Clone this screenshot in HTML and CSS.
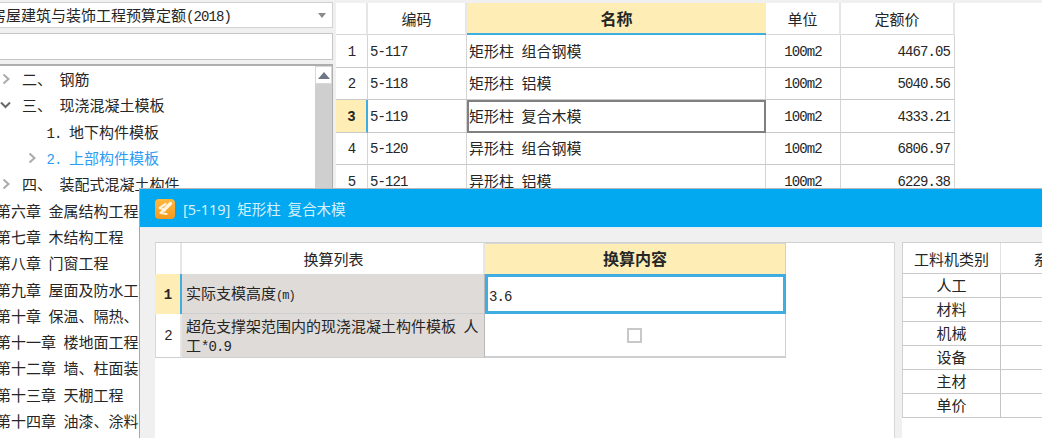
FILE: index.html
```html
<!DOCTYPE html>
<html lang="zh">
<head>
<meta charset="utf-8">
<title>定额换算</title>
<link rel="stylesheet" href="styles.css">
</head>
<body>
<div class="app">
  <aside class="side">
    <div class="combo">
      <span class="combo-text">房屋建筑与装饰工程预算定额<span class="num">(2018)</span></span>
      <svg class="caret" width="8" height="5" viewBox="0 0 8 5"><path d="M0 0h8L4 5z" fill="#8a8a8a"/></svg>
    </div>
    <div class="search"></div>
    <div class="tree">
      <div class="tree-rows">
        <div class="row l1"><svg class="chev" width="8" height="12" viewBox="0 0 8 12"><path d="M1.500 1.500 6.500 6l-5 4.500" fill="none" stroke="#ababab" stroke-width="2"/></svg><span>二、 钢筋</span></div>
        <div class="row l1"><svg class="chev open" width="11" height="12" viewBox="0 0 11 12"><path d="M1 3.500 5.500 8 10 3.500" fill="none" stroke="#6a6a6a" stroke-width="2"/></svg><span>三、 现浇混凝土模板</span></div>
        <div class="row l2"><span class="chev-blank"></span><span><span class="num">1. </span>地下构件模板</span></div>
        <div class="row l2 active"><svg class="chev" width="8" height="12" viewBox="0 0 8 12"><path d="M1.500 1.500 6.500 6l-5 4.500" fill="none" stroke="#ababab" stroke-width="2"/></svg><span><span class="num">2. </span>上部构件模板</span></div>
        <div class="row l1"><svg class="chev" width="8" height="12" viewBox="0 0 8 12"><path d="M1.500 1.500 6.500 6l-5 4.500" fill="none" stroke="#ababab" stroke-width="2"/></svg><span>四、 装配式混凝土构件</span></div>
        <div class="row l0">第六章 金属结构工程</div>
        <div class="row l0">第七章 木结构工程</div>
        <div class="row l0">第八章 门窗工程</div>
        <div class="row l0">第九章 屋面及防水工程</div>
        <div class="row l0">第十章 保温、隔热、防腐工程</div>
        <div class="row l0">第十一章 楼地面工程</div>
        <div class="row l0">第十二章 墙、柱面装饰工程</div>
        <div class="row l0">第十三章 天棚工程</div>
        <div class="row l0">第十四章 油漆、涂料工程</div>
      </div>
      <div class="scrollbar">
        <div class="scroll-up"><svg width="12" height="7" viewBox="0 0 12 7"><path d="M0 7 6 0l6 7z" fill="#6f7688"/></svg></div>
      </div>
    </div>
  </aside>

  <main class="grid-wrap">
    <div class="quota">
      <div class="qh"></div><div class="qh">编码</div><div class="qh sel">名称</div><div class="qh">单位</div><div class="qh">定额价</div>

      <div class="qc ctr num">1</div><div class="qc num">5-117</div><div class="qc">矩形柱 组合钢模</div><div class="qc ctr num">100m2</div><div class="qc rt num">4467.05</div>
      <div class="qc ctr num">2</div><div class="qc num">5-118</div><div class="qc">矩形柱 铝模</div><div class="qc ctr num">100m2</div><div class="qc rt num">5040.56</div>
      <div class="qc ctr num cur">3</div><div class="qc num">5-119</div><div class="qc focus">矩形柱 复合木模</div><div class="qc ctr num">100m2</div><div class="qc rt num">4333.21</div>
      <div class="qc ctr num">4</div><div class="qc num">5-120</div><div class="qc">异形柱 组合钢模</div><div class="qc ctr num">100m2</div><div class="qc rt num">6806.97</div>
      <div class="qc ctr num">5</div><div class="qc num">5-121</div><div class="qc">异形柱 铝模</div><div class="qc ctr num">100m2</div><div class="qc rt num">6229.38</div>
    </div>
  </main>
</div>

<section class="dialog">
  <header class="dlg-title">
    <svg class="dlg-icon" width="20" height="20" viewBox="0 0 20 20">
      <defs><linearGradient id="ic" x1="0" y1="0" x2="0" y2="1"><stop offset="0" stop-color="#fdb840"/><stop offset="1" stop-color="#f79a1c"/></linearGradient></defs>
      <rect width="20" height="20" rx="4" fill="url(#ic)"/>
      <path d="M10.500 5 4.500 9 9 10.500 5.500 14 11.500 15" fill="none" stroke="#fff1d6" stroke-width="2.200" stroke-linecap="round" stroke-linejoin="round"/>
      <path d="M9 11 15.500 4.500" fill="none" stroke="#fff6e6" stroke-width="3.200" stroke-linecap="round"/>
    </svg>
    <span class="dlg-text">[5-119] 矩形柱 复合木模</span>
  </header>
  <div class="dlg-body">
    <div class="panel conv-panel">
      <div class="conv">
        <div class="ch"></div><div class="ch">换算列表</div><div class="ch sel">换算内容</div>

        <div class="cc cur num">1</div>
        <div class="cc name">实际支模高度<span class="small">(m)</span></div>
        <div class="cc value num">3.6</div>

        <div class="cc idx num">2</div>
        <div class="cc name">超危支撑架范围内的现浇混凝土构件模板 人工<span class="num">*0.9</span></div>
        <div class="cc check"><span class="box"></span></div>
      </div>
    </div>
    <div class="panel labor-panel">
      <div class="labor">
        <div class="lh">工料机类别</div><div class="lh">系数</div>
        <div class="lc">人工</div><div class="lc"></div>
        <div class="lc">材料</div><div class="lc"></div>
        <div class="lc">机械</div><div class="lc"></div>
        <div class="lc">设备</div><div class="lc"></div>
        <div class="lc">主材</div><div class="lc"></div>
        <div class="lc">单价</div><div class="lc"></div>
      </div>
    </div>
  </div>
</section>
</body>
</html>
```

FILE: styles.css
```css
* { box-sizing: border-box; }

html, body {
  margin: 0;
  height: 100%;
  overflow: hidden;
}

body {
  position: relative;
  width: 1042px;
  height: 438px;
  background: #f0f0f0;
  color: #262626;
  font-family: "Liberation Mono", "Noto Sans CJK SC", monospace;
  font-size: 15px;
  word-spacing: -1.5px;
}

.num {
  font-size: 14px;
  letter-spacing: -0.9px;
  word-spacing: 0;
}

.small {
  font-size: 12px;
  letter-spacing: -1px;
}

.app {
  display: flex;
  gap: 3px;
  height: 438px;
}

/* left column */
.side {
  width: 333px;
  flex: none;
  display: flex;
  flex-direction: column;
  overflow: hidden;
}

.combo {
  height: 26px;
  margin-top: 2px;
  background: #fff;
  border: 1px solid #d2d2d2;
  border-left: 0;
  display: flex;
  align-items: center;
  justify-content: space-between;
  padding-right: 6px;
  white-space: nowrap;
}

.combo-text { margin-left: -9px; }
.caret { flex: none; }

.search {
  height: 27px;
  margin-top: 5px;
  background: #fff;
  border: 1px solid #c6c6c6;
  border-left: 0;
}

.tree {
  flex: 1;
  margin-top: 4px;
  display: flex;
  min-height: 0;
  background: #fff;
  border-top: 2px solid #aeaeae;
  border-right: 1px solid #aeaeae;
}

.tree-rows {
  flex: 1;
  min-width: 0;
  overflow: hidden;
}

.row {
  height: 26.300px;
  display: flex;
  align-items: center;
  white-space: nowrap;
}

.row.l0 { margin-left: -4px; }
.row.l1 { padding-left: 2px; }
.row.l2 { padding-left: 28px; }
.row .chev { flex: none; }
.row.l1 .chev { margin-right: 12px; }
.row.l1 .chev.open { margin-left: -2px; margin-right: 11px; }
.row.l2 .chev, .chev-blank { width: 8px; margin-right: 10.500px; flex: none; }
.active { color: #2c9cf6; }

.scrollbar {
  width: 17px;
  flex: none;
  background: #cfcfcf;
}

.scroll-up {
  height: 18px;
  background: #fff;
  border: 1px solid #d8d8d8;
  display: flex;
  align-items: center;
  justify-content: center;
}

/* quota grid */
.grid-wrap {
  flex: 1;
  margin-top: 3px;
  background: #fff;
  overflow: hidden;
}

.quota {
  display: grid;
  width: 619px;
  grid-template-columns: 32px 99px 299px 75px 114px;
  grid-template-rows: 32px repeat(5, 32.500px);
}

.qh {
  display: flex;
  align-items: center;
  justify-content: center;
  background: #fff;
  border-right: 2px solid #e6e6e6;
  border-bottom: 1px solid #d8d8d8;
}

.qh.sel {
  background: #feedb5;
  font-weight: 700;
  font-size: 16px;
  border-right: 0;
  border-bottom: 2px solid #3fade0;
}

.qc {
  display: flex;
  align-items: center;
  padding-left: 2px;
  background: #fff;
  border-right: 1px solid #d4d4d4;
  border-bottom: 1px solid #c8c8c8;
  white-space: nowrap;
}

.qc.num { padding-top: 2px; }
.qc.ctr { justify-content: center; padding-left: 0; }
.qc.rt { justify-content: flex-end; padding-right: 4px; padding-left: 0; }

.qc.cur {
  background: #feedb5;
  border-right: 2px solid #3fade0;
  font-weight: 700;
}

.qc.focus {
  padding-left: 0;
  border: 2px solid #808080;
}

/* dialog window */
.dialog {
  position: absolute;
  left: 139px;
  top: 188px;
  right: 0;
  bottom: 0;
  display: flex;
  flex-direction: column;
  background: #f0f0f0;
  border-left: 1px solid #a8a8a8;
  border-top: 1px solid #b8b8b8;
}

.dlg-title {
  height: 39px;
  flex: none;
  display: flex;
  align-items: center;
  padding-left: 15px;
  background: #02a9f1;
  border-bottom: 1px solid #e6eef2;
}

.dlg-icon { flex: none; margin: 1px 8px 0 0; }

.dlg-text {
  color: #d6f0fc;
  font-family: "Noto Sans", "Noto Sans CJK SC", sans-serif;
  font-size: 14.500px;
  word-spacing: 3px;
  white-space: nowrap;
}

.dlg-body {
  flex: 1;
  min-height: 0;
  display: flex;
  gap: 7px;
  padding: 14px 0 0 15px;
}

.panel {
  background: #fff;
  border-top: 1px solid #d0d0d0;
}

.conv-panel {
  width: 740px;
  flex: none;
  border-right: 1px solid #d8d8d8;
}

.labor-panel {
  flex: 1;
  min-width: 0;
  overflow: hidden;
}

.conv {
  display: grid;
  width: 631px;
  grid-template-columns: 27px 303px 301px;
  grid-template-rows: 31px 40px 44px;
}

.ch {
  display: flex;
  align-items: center;
  justify-content: center;
  padding-left: 2px;
  border-right: 2px solid #e6e6e6;
}

.ch:first-child { border-left: 1px solid #d8d8d8; }

.ch.sel {
  background: #feedb5;
  font-weight: 700;
  font-size: 16px;
  padding: 0 0 2px;
  border: 0;
  border-right: 1px solid #d0d0d0;
  border-top: 1px solid #d6d6d6;
}

.cc {
  display: flex;
  align-items: center;
  border-bottom: 1px solid #cfcfcf;
}

.cc.cur {
  justify-content: center;
  padding-top: 2px;
  background: #feedb5;
  border-right: 2px solid #3fade0;
  font-weight: 700;
  border-bottom: 0;
}

.cc.idx {
  justify-content: center;
  border-left: 1px solid #d8d8d8;
  border-right: 2px solid #e6e6e6;
}

.cc.name {
  display: block;
  padding: 5px 4px 0;
  background: #dfdbd9;
  border-right: 1px solid #b8b8b8;
  line-height: 18px;
  align-content: center;
}

.cc.value {
  padding: 5px 0 0 1px;
  background: #fff;
  border: 3px solid #3fade0;
}

.cc.check {
  justify-content: center;
  padding-right: 2px;
  border-right: 1px solid #d0d0d0;
  border-bottom: 2px solid #cfcfcf;
}

.box {
  width: 15px;
  height: 15px;
  background: #fff;
  border: 2px solid #c8c8c8;
}

.labor {
  display: grid;
  width: 194px;
  grid-template-columns: 98px 96px;
  grid-template-rows: 31px repeat(6, 24px);
  border-left: 1px solid #d0d0d0;
}

.lh {
  display: flex;
  align-items: center;
  justify-content: center;
  padding-top: 2px;
  white-space: nowrap;
  border-right: 1px solid #e2e2e2;
  border-bottom: 1px solid #c8c8c8;
}

.lc {
  display: flex;
  align-items: flex-end;
  justify-content: center;
  height: 24px;
  line-height: 18px;
  border-right: 1px solid #c4c4c4;
  border-bottom: 1px solid #c8c8c8;
}
```
